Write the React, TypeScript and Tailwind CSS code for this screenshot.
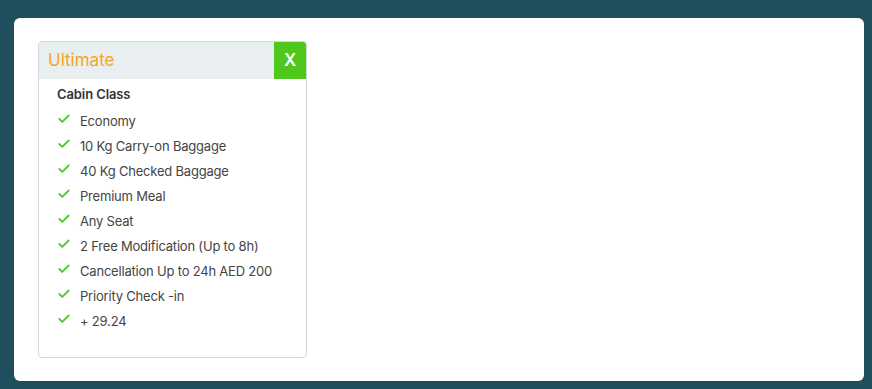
import { Check } from 'lucide-react';

const features = [
  'Economy',
  '10 Kg Carry-on Baggage',
  '40 Kg Checked Baggage',
  'Premium Meal',
  'Any Seat',
  '2 Free Modification (Up to 8h)',
  'Cancellation Up to 24h AED 200',
  'Priority Check -in',
  '+ 29.24',
];

export default function App() {
  return (
    <div
      className="h-[389px] w-[872px] bg-[#1f4e5d] pt-[18px] pr-[8px] pb-[8px] pl-[14px]"
      style={{ fontFamily: 'Inter, "Noto Sans", sans-serif' }}
    >
      <div className="h-[363px] rounded-md bg-white pt-[23px] pl-[24px]">
        {/* Fare card */}
        <div className="flex h-[317px] w-[269px] flex-col overflow-hidden rounded-[4px] border border-[#d4d6d8]">
          <div className="flex h-[37px] items-stretch bg-[#e9eef0]">
            <span className="flex-1 pl-[9px] pt-[7px] text-[17px] leading-[22px] text-[#f5a623]">Ultimate</span>
            <button className="flex w-[32px] items-center justify-center bg-[#4fc71c] text-[17px] font-semibold text-white">
              X
            </button>
          </div>
          <div className="px-[18px] pt-[6px]">
            <h4 className="text-[13px] font-semibold leading-[18px] tracking-[-0.1px] text-[#333]">Cabin Class</h4>
            <ul className="mt-[10px] flex flex-col gap-[7px]">
              {features.map((f) => (
                <li key={f} className="flex h-[18px] items-center text-[13px] tracking-[-0.2px] text-[#444]">
                  <Check className="mr-[9px] -mt-[7px] h-[14px] w-[14px] text-[#4ccb2c]" strokeWidth={3.2} />
                  {f}
                </li>
              ))}
            </ul>
          </div>
        </div>
      </div>
    </div>
  );
}
